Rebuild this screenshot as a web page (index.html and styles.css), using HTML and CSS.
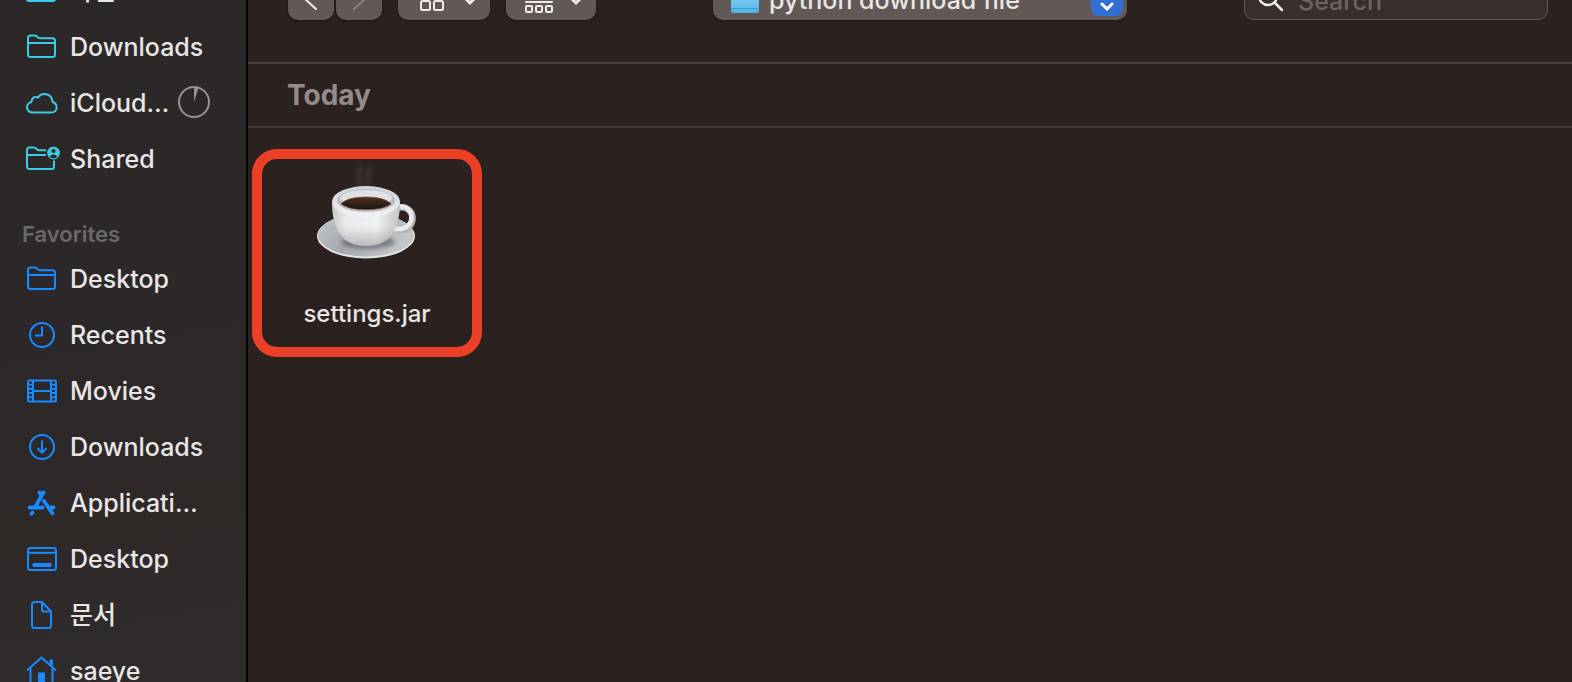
FILE: index.html
```html
<!DOCTYPE html>
<html lang="en">
<head>
<meta charset="utf-8">
<title>python download file</title>
<link rel="stylesheet" href="styles.css">
</head>
<body>
<div class="window">
  <nav class="sidebar" aria-label="Sidebar">
    <ul class="list cyan">
      <li><a class="row" href="#"><svg class="icon" viewBox="0 0 36 36"><path d="M5 9q0-3 3-3h6l4 3h12q3 0 3 3v14q0 2-2 2H7q-2 0-2-2z" fill="currentColor"/></svg><span class="label">사진</span></a></li>
      <li><a class="row" href="#"><svg class="icon" viewBox="0 0 36 36"><path d="M6 26V9q0-2.500 2.500-2.500h4q1.500 0 2.500 1l1 1q.8.700 2 .700h12.500q2.500 0 2.500 2.500V25.500q0 2.500-2.500 2.500h-22Q6 28 6 25.500zM6 14h27"/></svg><span class="label">Downloads</span></a></li>
      <li><a class="row" href="#"><svg class="icon" viewBox="0 0 36 36"><path d="M11.500 27.500c-8 0-8.500-9-2-10.500 0-4 3-6 6.500-4.500 4-6 14-4 14.500 4.500 6 2 5.500 10.500-1.500 10.500z"/></svg><span class="label">iCloud Drive</span><svg class="progress" viewBox="0 0 32 32" role="img" aria-label="Syncing"><circle cx="16" cy="15" r="15"/><path d="M16 15V0l4.500.8z"/></svg></a></li>
      <li><a class="row" href="#"><svg class="icon" viewBox="0 0 36 36"><path d="M24 9.200h-7q-1.200 0-2-.7l-1-1q-1-1-2.500-1h-4Q5 6.500 5 9V25.500q0 2.500 2.500 2.500h22.500Q32 28 32 25.500v-6M5 14h19"/><circle cx="31.500" cy="12" r="6.400" fill="currentColor" stroke="none"/><circle cx="31.500" cy="10" r="2.100" class="cut"/><path d="M27.500 15.700q4-4.500 8 0-4 3-8 0z" class="cut"/></svg><span class="label">Shared</span></a></li>
    </ul>
    <h2 class="section">Favorites</h2>
    <ul class="list blue">
      <li><a class="row" href="#"><svg class="icon" viewBox="0 0 36 36"><path d="M6 26V9q0-2.500 2.500-2.500h4q1.500 0 2.500 1l1 1q.8.700 2 .700h12.500q2.500 0 2.500 2.500V25.500q0 2.500-2.500 2.500h-22Q6 28 6 25.500zM6 14h27"/></svg><span class="label">Desktop</span></a></li>
      <li><a class="row" href="#"><svg class="icon" viewBox="0 0 36 36"><circle cx="20" cy="18" r="12"/><path d="M20 9.500v9h-7"/></svg><span class="label">Recents</span></a></li>
      <li><a class="row" href="#"><svg class="icon" viewBox="0 0 36 36"><rect x="6" y="7.500" width="28" height="21" rx="1.500"/><path d="M11 7.500v21M29 7.500v21M11 18h18M6 11.700h5M6 15.900h5M6 20.100h5M6 24.300h5M29 11.700h5M29 15.900h5M29 20.100h5M29 24.300h5"/></svg><span class="label">Movies</span></a></li>
      <li><a class="row" href="#"><svg class="icon" viewBox="0 0 36 36"><circle cx="20" cy="18" r="12"/><path d="M20 11.500v12M15.500 19.300l4.500 4.500 4.500-4.500"/></svg><span class="label">Downloads</span></a></li>
      <li><a class="row" href="#"><svg class="icon" viewBox="0 0 36 36"><g stroke-width="3.800" stroke-linecap="round"><path d="M21.500 7.500l-8 14M7.500 22.500h13M17.500 7.500l1.500 3M22 16l8.500 12.500M27 22.500h4.500M10.500 27.500l-1 1.200"/></g></svg><span class="label">Applications</span></a></li>
      <li><a class="row" href="#"><svg class="icon" viewBox="0 0 36 36"><rect x="6" y="7" width="28" height="22" rx="2.500"/><path d="M6 11.800h28"/><rect x="10.500" y="22" width="19" height="4" rx="1" fill="currentColor" stroke="none"/></svg><span class="label">Desktop</span></a></li>
      <li><a class="row" href="#"><svg class="icon" viewBox="0 0 36 36"><path d="M12.500 5h7.500l9 9.500v14q0 2.500-2.500 2.500h-14Q10 31 10 28.500v-21Q10 5 12.500 5zM20 5v7.500q0 2 2 2h7"/></svg><span class="label">문서</span></a></li>
      <li><a class="row" href="#"><svg class="icon" viewBox="0 0 36 36"><path d="M5 17.500L19.500 4.500 34 17.500M8.500 15v15q0 2 2 2h18q2 0 2-2V15M28.500 12V7.500h1.500v5"/><path d="M16 32V19.500h7V32z" fill="currentColor" stroke="none"/></svg><span class="label">saeye</span></a></li>
    </ul>
  </nav>
  <main class="content">
    <header class="toolbar">
      <div class="nav-buttons">
        <button class="btn" type="button" aria-label="Back"><svg class="glyph" viewBox="0 0 46 44"><path d="M28 11L16 22l12 11"/></svg></button>
        <button class="btn" type="button" aria-label="Forward" disabled><svg class="glyph" viewBox="0 0 46 44"><path d="M18 33l12-11-12-11"/></svg></button>
      </div>
      <button class="btn view" type="button" aria-label="Icon view"><svg class="glyph" viewBox="0 0 92 44"><rect x="23" y="12" width="9" height="9" rx="1.500"/><rect x="36" y="12" width="9" height="9" rx="1.500"/><rect x="23" y="25" width="9" height="9" rx="1.500"/><rect x="36" y="25" width="9" height="9" rx="1.500"/><path class="bold" d="M67 22l5 5 5-5"/></svg></button>
      <button class="btn group" type="button" aria-label="Group by"><svg class="glyph" viewBox="0 0 90 44"><path d="M19 16h27M20 26h26"/><rect x="20" y="30" width="6" height="6" rx="1"/><rect x="30" y="30" width="6" height="6" rx="1"/><rect x="40" y="30" width="6" height="6" rx="1"/><path class="bold" d="M65 22l5 5 5-5"/></svg></button>
      <button class="btn location" type="button"><svg class="folder" viewBox="0 0 28 30"><defs><linearGradient id="sky" x2="0" y2="1"><stop offset="0" stop-color="#9ad9f8"/><stop offset="1" stop-color="#52b3e6"/></linearGradient></defs><path d="M0 4h10l3 3h15v21q0 2-2 2H2q-2 0-2-2z" fill="url(#sky)"/><path d="M0 25.500h28" stroke="#409fd2"/></svg><span class="location-name">python download file</span><span class="stepper"><svg viewBox="0 0 32 36"><path d="M11 12l5-5 5 5M11 24l5 5 5-5"/></svg></span></button>
      <label class="search"><svg viewBox="0 0 26 30"><circle cx="10" cy="13" r="9"/><path d="M17 20l7 7"/></svg><input type="search" placeholder="Search" aria-label="Search"></label>
    </header>
    <h1 class="group-title">Today</h1>
    <div class="files">
      <button class="file" type="button">
        <svg class="cup" viewBox="1 0 132 110" aria-hidden="true">
          <defs>
            <linearGradient id="body" x2="1"><stop offset="0" stop-color="#c5c8cd"/><stop offset=".2" stop-color="#eaeaeb"/><stop offset=".65" stop-color="#f1f1f1"/><stop offset="1" stop-color="#c2c4c8"/></linearGradient>
            <linearGradient id="shade" x2="0" y2="1"><stop offset=".55" stop-color="#777" stop-opacity="0"/><stop offset="1" stop-color="#666" stop-opacity=".4"/></linearGradient>
            <linearGradient id="plate" x2="1" y2=".4"><stop offset="0" stop-color="#c4cad2"/><stop offset=".5" stop-color="#a5a8ad"/><stop offset="1" stop-color="#c3c7cc"/></linearGradient>
            <linearGradient id="rim" x2="0" y2="1"><stop offset="0" stop-color="#cdd1d6"/><stop offset="1" stop-color="#f2f2f3"/></linearGradient>
            <linearGradient id="coffee" x2="0" y2="1"><stop offset="0" stop-color="#52321a"/><stop offset="1" stop-color="#171411"/></linearGradient>
            <filter id="soft" x="-50%" y="-50%" width="200%" height="200%"><feGaussianBlur stdDeviation="2"/></filter>
          </defs>
          <path d="M61 27q-5-8 0-21M69 27q-4-9 2-21" fill="none" stroke="#766e6c" stroke-width="5" opacity=".22" filter="url(#soft)"/>
          <ellipse cx="66" cy="76" rx="49" ry="22.500" fill="#e2e4e5"/>
          <ellipse cx="66" cy="75" rx="48" ry="21.500" fill="url(#plate)"/>
          <ellipse cx="68" cy="82" rx="27" ry="7" fill="#5c6067" opacity=".65" filter="url(#soft)"/>
          <path d="M97 48c19-5 21 21 4 22l-8-1" fill="none" stroke="#b0b3b8" stroke-width="6.500"/>
          <path d="M97 47c18-4 19 20 4 22h-7" fill="none" stroke="#e9eaec" stroke-width="4.500"/>
          <path d="M32 42c0 23 7 44 34 44s34-21 34-44z" fill="url(#body)"/>
          <path d="M32 42c0 23 7 44 34 44s34-21 34-44z" fill="url(#shade)"/>
          <ellipse cx="66" cy="41.500" rx="34" ry="15.500" fill="url(#rim)"/>
          <ellipse cx="66" cy="40.500" rx="29" ry="11.500" fill="#b8bdc3"/>
          <ellipse cx="66" cy="38" rx="26" ry="8" fill="#dfe2e5"/>
          <path d="M41 44q6-7 25-7t25 7q-7 5.500-25 5.500T41 44z" fill="url(#coffee)" stroke="#6c3b18" stroke-width=".6"/>
        </svg>
        <span class="file-name">settings.jar</span>
      </button>
    </div>
  </main>
</div>
</body>
</html>
```
FILE: styles.css
```css
* { box-sizing: border-box; }
body {
  margin: 0;
  background: #2b2220;
  color: #e8e6e6;
  font-family: Inter, "Noto Sans CJK KR", sans-serif;
  font-weight: 500;
}
button, input { font: inherit; color: inherit; }
.window { display: flex; height: 100vh; overflow: hidden; }

.sidebar {
  flex: 0 0 248px;
  min-width: 0;
  margin-top: -37px;
  border-right: 2px solid #000;
  background: linear-gradient(170deg, #2c2827, #2c2829 50%, #2e2927 75%, #302c2c);
}
.list { margin: 0; padding: 0; list-style: none; }
.row {
  display: flex;
  align-items: center;
  gap: 6px;
  height: 56px;
  padding: 0 36px 0 22px;
  color: inherit;
  text-decoration: none;
}
.icon {
  flex: none;
  width: 36px;
  height: 36px;
  margin-right: 6px;
  overflow: visible;
  fill: none;
  stroke: currentColor;
  stroke-width: 2;
  stroke-linejoin: round;
}
.cyan .icon { color: #3bcbe6; }
.blue .icon { color: #168aff; }
.icon .cut { fill: #2c2829; stroke: none; }
.label {
  flex: 0 1 auto;
  min-width: 0;
  overflow: hidden;
  font-size: 25px;
  line-height: 36px;
  text-overflow: ellipsis;
  white-space: nowrap;
}
.progress { flex: none; width: 32px; height: 32px; margin-left: auto; overflow: visible; fill: none; stroke: #979393; stroke-width: 2; }
.progress path { fill: #979393; stroke: none; }
.section {
  margin: 0;
  padding: 33px 22px 3px;
  color: #6d6868;
  font-size: 22px;
  font-weight: 600;
  line-height: 28px;
}

.content { flex: 1; min-width: 0; }
.toolbar {
  display: flex;
  height: 88px;
  margin-top: -24px;
  padding: 0 24px 0 40px;
  border-bottom: 2px solid #4a4040;
}
.btn {
  height: 44px;
  padding: 0;
  border: 0;
  border-radius: 10px;
  background: #625957;
  box-shadow: 0 1px 2px #1a1413;
}
.nav-buttons { display: flex; gap: 2px; margin-right: 16px; }
.nav-buttons .btn { width: 46px; }
.view { width: 92px; margin-right: 16px; }
.group { width: 90px; }
.glyph { display: block; height: 44px; fill: none; stroke: #eeebeb; stroke-width: 2; stroke-linecap: round; }
.btn:disabled .glyph { stroke: #8b8382; }
.glyph .bold { stroke-width: 3; }
.location {
  display: flex;
  align-items: center;
  width: 414px;
  margin: 0 auto;
  padding: 0 4px 0 18px;
  text-align: left;
}
.folder { width: 28px; height: 30px; margin-right: 10px; }
.location-name { flex: 1; padding-top: 4px; font-size: 25px; line-height: 36px; }
.stepper { height: 36px; border-radius: 8px; background: #2f70d2; }
.stepper svg { display: block; width: 32px; height: 36px; fill: none; stroke: #fff; stroke-width: 3; stroke-linecap: round; stroke-linejoin: round; }
.search {
  display: flex;
  align-items: center;
  gap: 14px;
  width: 304px;
  height: 44px;
  padding: 0 13px;
  border: 1px solid #625957;
  border-radius: 10px;
  background: #382e2c;
}
.search svg { flex: none; width: 26px; height: 30px; overflow: visible; fill: none; stroke: #eeebeb; stroke-width: 2.5; stroke-linecap: round; }
.search input { min-width: 0; padding: 5px 0 0; border: 0; outline: 0; background: none; font-size: 25px; }
.search input::placeholder { color: #6d6462; }

.group-title {
  margin: 0;
  padding: 13px 39px 12px;
  border-bottom: 2px solid #403736;
  color: #938c8b;
  font-size: 28px;
  font-weight: 700;
  line-height: 37px;
}
.files { display: flex; padding: 21px 4px; }
.file {
  display: flex;
  flex-direction: column;
  align-items: center;
  width: 230px;
  padding: 1px 0 17px;
  border: 10px solid #ec4026;
  border-radius: 25px;
  background: none;
}
.cup { width: 132px; height: 110px; }
.file-name { margin-top: 28px; font-size: 24px; line-height: 32px; }
```
